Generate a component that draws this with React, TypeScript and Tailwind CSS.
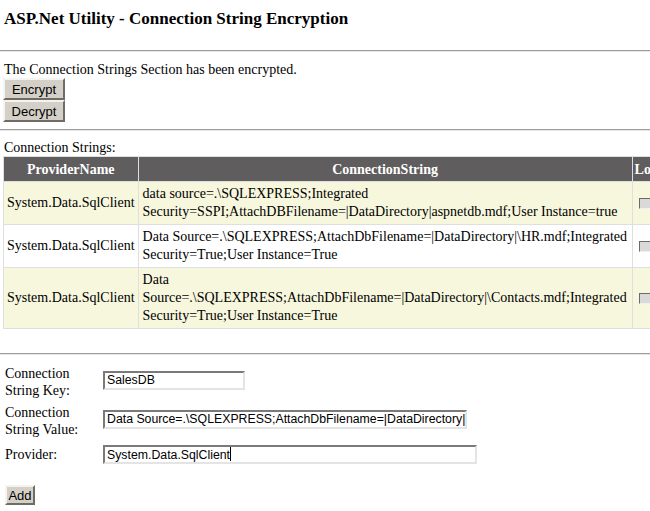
import React from 'react';

const serif = "font-['Liberation_Serif','Times_New_Roman',serif]";
const sans = "font-['Liberation_Sans',Arial,sans-serif]";

const rows = [
  {
    provider: 'System.Data.SqlClient',
    lines: [
      'data source=.\\SQLEXPRESS;Integrated',
      'Security=SSPI;AttachDBFilename=|DataDirectory|aspnetdb.mdf;User Instance=true',
    ],
  },
  {
    provider: 'System.Data.SqlClient',
    lines: [
      'Data Source=.\\SQLEXPRESS;AttachDbFilename=|DataDirectory|\\HR.mdf;Integrated',
      'Security=True;User Instance=True',
    ],
  },
  {
    provider: 'System.Data.SqlClient',
    lines: [
      'Data',
      'Source=.\\SQLEXPRESS;AttachDbFilename=|DataDirectory|\\Contacts.mdf;Integrated',
      'Security=True;User Instance=True',
    ],
  },
];

const Rule = ({ className = '' }: { className?: string }) => (
  <div className={`w-full border-t border-[#9c9c9c] border-b border-b-[#e6e6e6] ${className}`} />
);

const Button = ({ label, className = '' }: { label: string; className?: string }) => (
  <button
    className={`${sans} block bg-[#d4d0c8] text-[13px] leading-none text-black border-2 border-t-[#f4f3ef] border-l-[#f4f3ef] border-r-[#6f6c66] border-b-[#6f6c66] ${className}`}
  >
    {label}
  </button>
);

const TextBox = ({ value, className = '', caret = false }: { value: string; className?: string; caret?: boolean }) => (
  <div
    className={`${sans} h-[19px] overflow-hidden whitespace-nowrap bg-white text-[12.3px] leading-[15px] pl-[2px] border-2 border-t-[#7a7a7a] border-l-[#7a7a7a] border-r-[#e4e4e4] border-b-[#e4e4e4] ${className}`}
  >
    {value}
    {caret && <span className="inline-block w-px h-[14px] bg-black align-[-2px]" />}
  </div>
);

export default function App() {
  return (
    <div className={`${serif} w-[650px] h-[511px] overflow-hidden bg-white text-black text-[14px]`}>
      <div className="w-[700px]">
        <h3 className="pl-[4px] pt-[8px] text-[17px] leading-[22px] font-bold">
          ASP.Net Utility - Connection String Encryption
        </h3>
        <Rule className="mt-[20px]" />

        <p className="pl-[4px] mt-[9px] leading-[17px]">The Connection Strings Section has been encrypted.</p>
        <div className="pl-[3px]">
          <Button label="Encrypt" className="w-[62px] h-[22px] border-t-[#3a3a3a] border-l-[#3a3a3a] border-r-[#3a3a3a] border-b-[#3a3a3a] border" />
          <Button label="Decrypt" className="w-[62px] h-[22px]" />
        </div>
        <Rule className="mt-[7px]" />

        <div className="pl-[4px] mt-[8px] leading-[17px]">Connection Strings:</div>
        <table className="ml-[3px] border-collapse">
          <thead>
            <tr className="bg-[#5f5d5d] text-white font-bold h-[25px]">
              <th className="w-[133px] border border-[#dedfde] text-center">ProviderName</th>
              <th className="w-[494px] border border-[#dedfde] text-center">ConnectionString</th>
              <th className="w-[60px] border border-[#dedfde] text-left pl-[2px]">Locked</th>
            </tr>
          </thead>
          <tbody>
            {rows.map((row, i) => (
              <tr key={i} className={i % 2 === 0 ? 'bg-[#f7f7de]' : 'bg-white'}>
                <td className="border border-[#dedfde] px-[3px] whitespace-nowrap leading-[18px]">{row.provider}</td>
                <td className="border border-[#dedfde] px-[4px] py-[3px] leading-[18px]">
                  {row.lines.map((line) => (
                    <div key={line} className="whitespace-nowrap">
                      {line}
                    </div>
                  ))}
                </td>
                <td className="border border-[#dedfde] pl-[6px]">
                  <span className="block w-[12px] h-[11px] bg-[#d9d9d9] border border-t-[#6b6b6b] border-l-[#6b6b6b] border-r-[#f0f0f0] border-b-[#f0f0f0]" />
                </td>
              </tr>
            ))}
          </tbody>
        </table>

        <Rule className="mt-[24px]" />

        <div className="pl-[5px] mt-[10px] grid grid-cols-[98px_auto] gap-y-[5px] items-center leading-[17px]">
          <div>
            Connection
            <br />
            String Key:
          </div>
          <TextBox value="SalesDB" className="w-[142px] self-start mt-[6px]" />
          <div>
            Connection
            <br />
            String Value:
          </div>
          <TextBox
            value="Data Source=.\SQLEXPRESS;AttachDbFilename=|DataDirectory|\SalesDB.mdf"
            className="w-[364px] self-start mt-[6px]"
          />
          <div className="mt-[2px]">Provider:</div>
          <TextBox value="System.Data.SqlClient" caret className="w-[374px] mt-[2px]" />
        </div>

        <div className="pl-[5px] mt-[21px]">
          <Button label="Add" className="w-[30px] h-[20px]" />
        </div>
      </div>
    </div>
  );
}
